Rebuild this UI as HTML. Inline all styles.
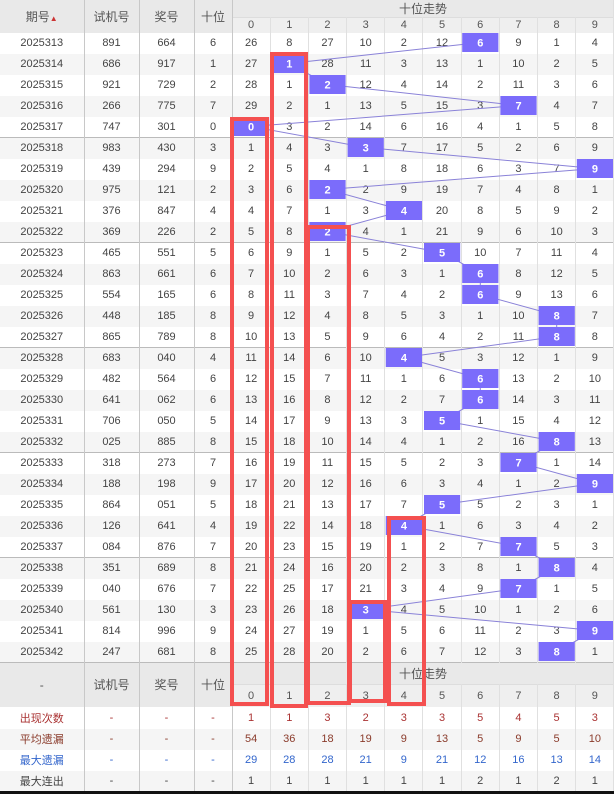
<!DOCTYPE html>
<html><head><meta charset="utf-8"><style>
html,body{margin:0;padding:0;background:#fff;width:614px;height:794px;overflow:hidden}
body{font-family:"Liberation Sans","Noto Sans CJK SC",sans-serif;font-size:11px;color:#444;position:relative}
table{border-collapse:collapse;table-layout:fixed;width:614px;position:absolute;left:0;top:0}
td,th{padding:0;text-align:center;border-right:1px solid #e0e0e0;font-weight:normal;overflow:hidden;white-space:nowrap}
th{background:#e9e9e9;color:#555;font-size:12px}
th.s{background:#efefef;font-size:11px;border-top:1px solid #ddd}
th.l,td.l{border-right:1px solid #c8c8c8}
tbody tr{height:21px}
tbody tr:nth-child(even){background:#f5f5f5}
tr.g td{border-top:1px solid #bbb}
.c1{color:#a33}.c2{color:#8a3b2b}.c3{color:#3366cc}
.f tr{height:21px}
</style></head><body>
<table>
<colgroup><col style="width:84px"><col style="width:55px"><col style="width:55px"><col style="width:38px"><col span="10" style="width:38.2px"></colgroup>
<thead>
<tr style="height:17px"><th rowspan="2" class="l">期号<span style="font-size:8px;color:#c33">▲</span></th><th rowspan="2" class="l">试机号</th><th rowspan="2" class="l">奖号</th><th rowspan="2" class="l">十位</th><th colspan="10">十位走势</th></tr>
<tr style="height:15px"><th class="s">0</th><th class="s">1</th><th class="s">2</th><th class="s">3</th><th class="s">4</th><th class="s">5</th><th class="s">6</th><th class="s">7</th><th class="s">8</th><th class="s">9</th></tr>
</thead>
<tbody>
<tr><td class="l">2025313</td><td class="l">891</td><td class="l">664</td><td class="l">6</td><td>26</td><td>8</td><td>27</td><td>10</td><td>2</td><td>12</td><td>6</td><td>9</td><td>1</td><td>4</td></tr>
<tr><td class="l">2025314</td><td class="l">686</td><td class="l">917</td><td class="l">1</td><td>27</td><td>1</td><td>28</td><td>11</td><td>3</td><td>13</td><td>1</td><td>10</td><td>2</td><td>5</td></tr>
<tr><td class="l">2025315</td><td class="l">921</td><td class="l">729</td><td class="l">2</td><td>28</td><td>1</td><td>2</td><td>12</td><td>4</td><td>14</td><td>2</td><td>11</td><td>3</td><td>6</td></tr>
<tr><td class="l">2025316</td><td class="l">266</td><td class="l">775</td><td class="l">7</td><td>29</td><td>2</td><td>1</td><td>13</td><td>5</td><td>15</td><td>3</td><td>7</td><td>4</td><td>7</td></tr>
<tr><td class="l">2025317</td><td class="l">747</td><td class="l">301</td><td class="l">0</td><td>0</td><td>3</td><td>2</td><td>14</td><td>6</td><td>16</td><td>4</td><td>1</td><td>5</td><td>8</td></tr>
<tr class="g"><td class="l">2025318</td><td class="l">983</td><td class="l">430</td><td class="l">3</td><td>1</td><td>4</td><td>3</td><td>3</td><td>7</td><td>17</td><td>5</td><td>2</td><td>6</td><td>9</td></tr>
<tr><td class="l">2025319</td><td class="l">439</td><td class="l">294</td><td class="l">9</td><td>2</td><td>5</td><td>4</td><td>1</td><td>8</td><td>18</td><td>6</td><td>3</td><td>7</td><td>9</td></tr>
<tr><td class="l">2025320</td><td class="l">975</td><td class="l">121</td><td class="l">2</td><td>3</td><td>6</td><td>2</td><td>2</td><td>9</td><td>19</td><td>7</td><td>4</td><td>8</td><td>1</td></tr>
<tr><td class="l">2025321</td><td class="l">376</td><td class="l">847</td><td class="l">4</td><td>4</td><td>7</td><td>1</td><td>3</td><td>4</td><td>20</td><td>8</td><td>5</td><td>9</td><td>2</td></tr>
<tr><td class="l">2025322</td><td class="l">369</td><td class="l">226</td><td class="l">2</td><td>5</td><td>8</td><td>2</td><td>4</td><td>1</td><td>21</td><td>9</td><td>6</td><td>10</td><td>3</td></tr>
<tr class="g"><td class="l">2025323</td><td class="l">465</td><td class="l">551</td><td class="l">5</td><td>6</td><td>9</td><td>1</td><td>5</td><td>2</td><td>5</td><td>10</td><td>7</td><td>11</td><td>4</td></tr>
<tr><td class="l">2025324</td><td class="l">863</td><td class="l">661</td><td class="l">6</td><td>7</td><td>10</td><td>2</td><td>6</td><td>3</td><td>1</td><td>6</td><td>8</td><td>12</td><td>5</td></tr>
<tr><td class="l">2025325</td><td class="l">554</td><td class="l">165</td><td class="l">6</td><td>8</td><td>11</td><td>3</td><td>7</td><td>4</td><td>2</td><td>6</td><td>9</td><td>13</td><td>6</td></tr>
<tr><td class="l">2025326</td><td class="l">448</td><td class="l">185</td><td class="l">8</td><td>9</td><td>12</td><td>4</td><td>8</td><td>5</td><td>3</td><td>1</td><td>10</td><td>8</td><td>7</td></tr>
<tr><td class="l">2025327</td><td class="l">865</td><td class="l">789</td><td class="l">8</td><td>10</td><td>13</td><td>5</td><td>9</td><td>6</td><td>4</td><td>2</td><td>11</td><td>8</td><td>8</td></tr>
<tr class="g"><td class="l">2025328</td><td class="l">683</td><td class="l">040</td><td class="l">4</td><td>11</td><td>14</td><td>6</td><td>10</td><td>4</td><td>5</td><td>3</td><td>12</td><td>1</td><td>9</td></tr>
<tr><td class="l">2025329</td><td class="l">482</td><td class="l">564</td><td class="l">6</td><td>12</td><td>15</td><td>7</td><td>11</td><td>1</td><td>6</td><td>6</td><td>13</td><td>2</td><td>10</td></tr>
<tr><td class="l">2025330</td><td class="l">641</td><td class="l">062</td><td class="l">6</td><td>13</td><td>16</td><td>8</td><td>12</td><td>2</td><td>7</td><td>6</td><td>14</td><td>3</td><td>11</td></tr>
<tr><td class="l">2025331</td><td class="l">706</td><td class="l">050</td><td class="l">5</td><td>14</td><td>17</td><td>9</td><td>13</td><td>3</td><td>5</td><td>1</td><td>15</td><td>4</td><td>12</td></tr>
<tr><td class="l">2025332</td><td class="l">025</td><td class="l">885</td><td class="l">8</td><td>15</td><td>18</td><td>10</td><td>14</td><td>4</td><td>1</td><td>2</td><td>16</td><td>8</td><td>13</td></tr>
<tr class="g"><td class="l">2025333</td><td class="l">318</td><td class="l">273</td><td class="l">7</td><td>16</td><td>19</td><td>11</td><td>15</td><td>5</td><td>2</td><td>3</td><td>7</td><td>1</td><td>14</td></tr>
<tr><td class="l">2025334</td><td class="l">188</td><td class="l">198</td><td class="l">9</td><td>17</td><td>20</td><td>12</td><td>16</td><td>6</td><td>3</td><td>4</td><td>1</td><td>2</td><td>9</td></tr>
<tr><td class="l">2025335</td><td class="l">864</td><td class="l">051</td><td class="l">5</td><td>18</td><td>21</td><td>13</td><td>17</td><td>7</td><td>5</td><td>5</td><td>2</td><td>3</td><td>1</td></tr>
<tr><td class="l">2025336</td><td class="l">126</td><td class="l">641</td><td class="l">4</td><td>19</td><td>22</td><td>14</td><td>18</td><td>4</td><td>1</td><td>6</td><td>3</td><td>4</td><td>2</td></tr>
<tr><td class="l">2025337</td><td class="l">084</td><td class="l">876</td><td class="l">7</td><td>20</td><td>23</td><td>15</td><td>19</td><td>1</td><td>2</td><td>7</td><td>7</td><td>5</td><td>3</td></tr>
<tr class="g"><td class="l">2025338</td><td class="l">351</td><td class="l">689</td><td class="l">8</td><td>21</td><td>24</td><td>16</td><td>20</td><td>2</td><td>3</td><td>8</td><td>1</td><td>8</td><td>4</td></tr>
<tr><td class="l">2025339</td><td class="l">040</td><td class="l">676</td><td class="l">7</td><td>22</td><td>25</td><td>17</td><td>21</td><td>3</td><td>4</td><td>9</td><td>7</td><td>1</td><td>5</td></tr>
<tr><td class="l">2025340</td><td class="l">561</td><td class="l">130</td><td class="l">3</td><td>23</td><td>26</td><td>18</td><td>3</td><td>4</td><td>5</td><td>10</td><td>1</td><td>2</td><td>6</td></tr>
<tr><td class="l">2025341</td><td class="l">814</td><td class="l">996</td><td class="l">9</td><td>24</td><td>27</td><td>19</td><td>1</td><td>5</td><td>6</td><td>11</td><td>2</td><td>3</td><td>9</td></tr>
<tr><td class="l">2025342</td><td class="l">247</td><td class="l">681</td><td class="l">8</td><td>25</td><td>28</td><td>20</td><td>2</td><td>6</td><td>7</td><td>12</td><td>3</td><td>8</td><td>1</td></tr>
</tbody>
<tbody class="f">
<tr style="height:22px;background:#e9e9e9"><th rowspan="2" class="l" style="border-top:1px solid #bbb">-</th><th rowspan="2" class="l" style="border-top:1px solid #bbb">试机号</th><th rowspan="2" class="l" style="border-top:1px solid #bbb">奖号</th><th rowspan="2" class="l" style="border-top:1px solid #bbb">十位</th><th colspan="10" style="border-top:1px solid #bbb">十位走势</th></tr>
<tr style="height:22px"><th class="s">0</th><th class="s">1</th><th class="s">2</th><th class="s">3</th><th class="s">4</th><th class="s">5</th><th class="s">6</th><th class="s">7</th><th class="s">8</th><th class="s">9</th></tr>
<tr style="height:22px;background:#fff" class="c1"><td class="l">出现次数</td><td class="l">-</td><td class="l">-</td><td class="l">-</td><td>1</td><td>1</td><td>3</td><td>2</td><td>3</td><td>3</td><td>5</td><td>4</td><td>5</td><td>3</td></tr>
<tr style="background:#f5f5f5" class="c2"><td class="l">平均遗漏</td><td class="l">-</td><td class="l">-</td><td class="l">-</td><td>54</td><td>36</td><td>18</td><td>19</td><td>9</td><td>13</td><td>5</td><td>9</td><td>5</td><td>10</td></tr>
<tr style="background:#fff" class="c3"><td class="l">最大遗漏</td><td class="l">-</td><td class="l">-</td><td class="l">-</td><td>29</td><td>28</td><td>28</td><td>21</td><td>9</td><td>21</td><td>12</td><td>16</td><td>13</td><td>14</td></tr>
<tr style="background:#f5f5f5"><td class="l">最大连出</td><td class="l">-</td><td class="l">-</td><td class="l">-</td><td>1</td><td>1</td><td>1</td><td>1</td><td>1</td><td>1</td><td>2</td><td>1</td><td>2</td><td>1</td></tr>
</tbody>
</table>
<svg width="614" height="794" style="position:absolute;left:0;top:0" font-family="Liberation Sans, sans-serif" font-size="11" font-weight="bold">
<polyline fill="none" stroke="#8a82d8" stroke-width="1" points="480.3,42.5 289.3,63.5 327.5,84.5 518.5,105.5 251.1,126.5 365.7,147.5 594.9,168.5 327.5,189.5 403.9,210.5 327.5,231.5 442.1,252.5 480.3,273.5 480.3,294.5 556.7,315.5 556.7,336.5 403.9,357.5 480.3,378.5 480.3,399.5 442.1,420.5 556.7,441.5 518.5,462.5 594.9,483.5 442.1,504.5 403.9,525.5 518.5,546.5 556.7,567.5 518.5,588.5 365.7,609.5 594.9,630.5 556.7,651.5"/>
<g fill="#7b6cfb">
<rect x="462.2" y="33" width="36.2" height="19"/><rect x="271.2" y="54" width="36.2" height="19"/><rect x="309.4" y="75" width="36.2" height="19"/><rect x="500.4" y="96" width="36.2" height="19"/><rect x="233" y="117" width="36.2" height="19"/><rect x="347.6" y="138" width="36.2" height="19"/><rect x="576.8" y="159" width="36.2" height="19"/><rect x="309.4" y="180" width="36.2" height="19"/><rect x="385.8" y="201" width="36.2" height="19"/><rect x="309.4" y="222" width="36.2" height="19"/><rect x="424" y="243" width="36.2" height="19"/><rect x="462.2" y="264" width="36.2" height="19"/><rect x="462.2" y="285" width="36.2" height="19"/><rect x="538.6" y="306" width="36.2" height="19"/><rect x="538.6" y="327" width="36.2" height="19"/><rect x="385.8" y="348" width="36.2" height="19"/><rect x="462.2" y="369" width="36.2" height="19"/><rect x="462.2" y="390" width="36.2" height="19"/><rect x="424" y="411" width="36.2" height="19"/><rect x="538.6" y="432" width="36.2" height="19"/><rect x="500.4" y="453" width="36.2" height="19"/><rect x="576.8" y="474" width="36.2" height="19"/><rect x="424" y="495" width="36.2" height="19"/><rect x="385.8" y="516" width="36.2" height="19"/><rect x="500.4" y="537" width="36.2" height="19"/><rect x="538.6" y="558" width="36.2" height="19"/><rect x="500.4" y="579" width="36.2" height="19"/><rect x="347.6" y="600" width="36.2" height="19"/><rect x="576.8" y="621" width="36.2" height="19"/><rect x="538.6" y="642" width="36.2" height="19"/>
</g>
<g fill="#fff" text-anchor="middle">
<text x="480.3" y="46.5">6</text><text x="289.3" y="67.5">1</text><text x="327.5" y="88.5">2</text><text x="518.5" y="109.5">7</text><text x="251.1" y="130.5">0</text><text x="365.7" y="151.5">3</text><text x="594.9" y="172.5">9</text><text x="327.5" y="193.5">2</text><text x="403.9" y="214.5">4</text><text x="327.5" y="235.5">2</text><text x="442.1" y="256.5">5</text><text x="480.3" y="277.5">6</text><text x="480.3" y="298.5">6</text><text x="556.7" y="319.5">8</text><text x="556.7" y="340.5">8</text><text x="403.9" y="361.5">4</text><text x="480.3" y="382.5">6</text><text x="480.3" y="403.5">6</text><text x="442.1" y="424.5">5</text><text x="556.7" y="445.5">8</text><text x="518.5" y="466.5">7</text><text x="594.9" y="487.5">9</text><text x="442.1" y="508.5">5</text><text x="403.9" y="529.5">4</text><text x="518.5" y="550.5">7</text><text x="556.7" y="571.5">8</text><text x="518.5" y="592.5">7</text><text x="365.7" y="613.5">3</text><text x="594.9" y="634.5">9</text><text x="556.7" y="655.5">8</text>
</g>
<g fill="none" stroke="#f45050" stroke-width="4">
<rect x="232" y="119" width="35" height="585"/>
<rect x="272" y="54" width="34" height="652"/>
<rect x="308" y="227" width="41" height="476"/>
<rect x="350" y="602" width="35" height="99"/>
<rect x="389" y="518" width="35" height="186"/>
</g>
</svg>
<div style="position:absolute;left:0;top:791px;width:614px;height:3px;background:#111"></div>
</body></html>
